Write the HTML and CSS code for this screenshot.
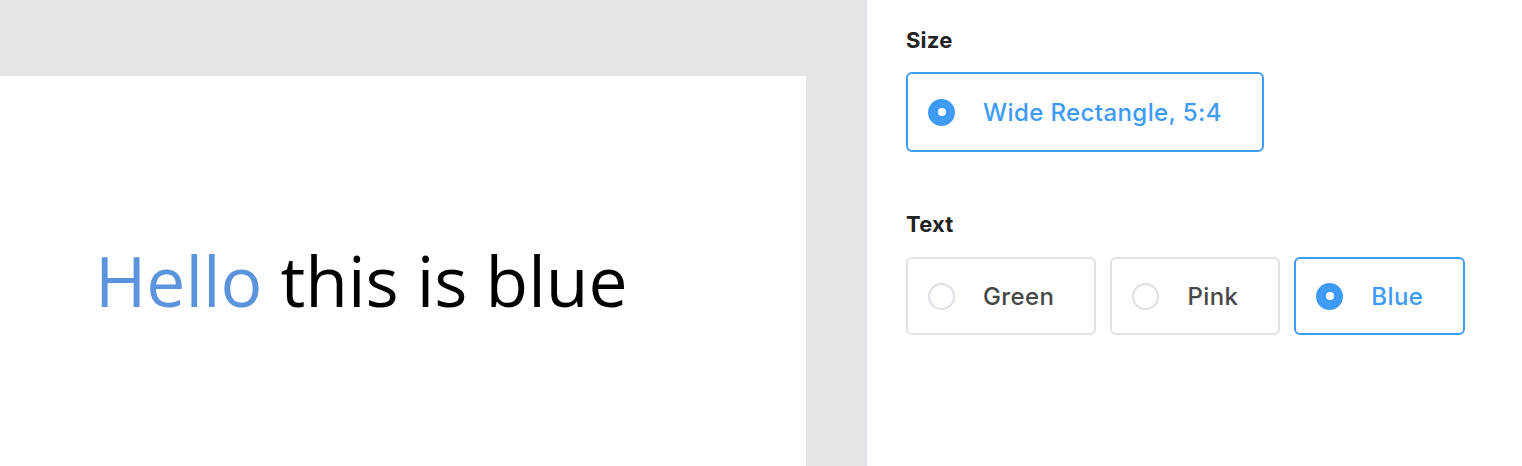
FILE: index.html
```html
<!DOCTYPE html>
<html lang="en">
<head>
    <meta charset="UTF-8">
    <meta name="viewport" content="width=device-width, initial-scale=1.0">
    <title>Text Card Editor</title>
    <link rel="stylesheet" href="styles.css">
</head>
<body>

    <div class="editor">
        <!-- Preview area -->
        <main class="preview">
            <div class="card">
                <p class="card-text"><span class="accent">Hello</span> this is blue</p>
            </div>
        </main>

        <!-- Options panel -->
        <aside class="panel">
            <h2 class="field-label">Size</h2>
            <div class="options">
                <label class="option selected option-size">
                    <span class="radio"></span>
                    <span class="option-text">Wide Rectangle, 5:4</span>
                </label>
            </div>

            <h2 class="field-label field-label-spaced">Text</h2>
            <div class="options">
                <label class="option">
                    <span class="radio"></span>
                    <span class="option-text">Green</span>
                </label>
                <label class="option">
                    <span class="radio"></span>
                    <span class="option-text">Pink</span>
                </label>
                <label class="option selected">
                    <span class="radio"></span>
                    <span class="option-text">Blue</span>
                </label>
            </div>
        </aside>
    </div>

</body>
</html>
```

FILE: styles.css
```css
/* General styling */
html, body {
    margin: 0;
    height: 100%;
}

body {
    font-family: Inter, Lato, Arial, sans-serif;
    background-color: #ffffff;
}

.editor {
    display: flex;
    height: 100%;
}

/* Preview area */
.preview {
    width: 865px;
    flex-shrink: 0;
    background-color: #e5e5e5;
    border-right: 2px solid #dfe3e8;
    padding-top: 76px;
    box-sizing: content-box;
    overflow: hidden;
}

.card {
    width: 806px;
    height: 100%;
    background-color: #ffffff;
    padding: 170px 0 0 95px;
    box-sizing: border-box;
}

.card-text {
    margin: 0;
    font-family: "Open Sans", sans-serif;
    font-size: 69.6px;
    line-height: 1;
    color: #000000;
}

.accent {
    color: #5b93dc;
}

/* Options panel */
.panel {
    flex: 1;
    padding: 28px 0 0 39px;
}

.field-label {
    margin: 0 0 20px;
    font-size: 22px;
    line-height: 24px;
    font-weight: 700;
    color: #222222;
    letter-spacing: 0.2px;
}

.field-label-spaced {
    margin-top: 60px;
    margin-bottom: 21px;
}

.options {
    display: flex;
    gap: 14px;
}

.option {
    display: flex;
    align-items: center;
    gap: 28px;
    height: 78px;
    padding: 0 40px 0 20px;
    border: 2px solid #dfe2e5;
    border-radius: 6px;
    box-sizing: border-box;
    cursor: pointer;
}

.option-size {
    height: 80px;
}

.option-text {
    font-size: 24px;
    font-weight: 500;
    letter-spacing: 0.4px;
    color: #474747;
}

.radio {
    width: 27px;
    height: 27px;
    border: 2px solid #dce0e4;
    border-radius: 50%;
    box-sizing: border-box;
    display: flex;
    align-items: center;
    justify-content: center;
}

.selected {
    border-color: #3d9bf5;
}

.selected .option-text {
    color: #3d9bf5;
}

.selected .radio {
    border: none;
    background-color: #3d9bf5;
}

.selected .radio::after {
    content: "";
    width: 8px;
    height: 8px;
    border-radius: 50%;
    background-color: #ffffff;
}
```
